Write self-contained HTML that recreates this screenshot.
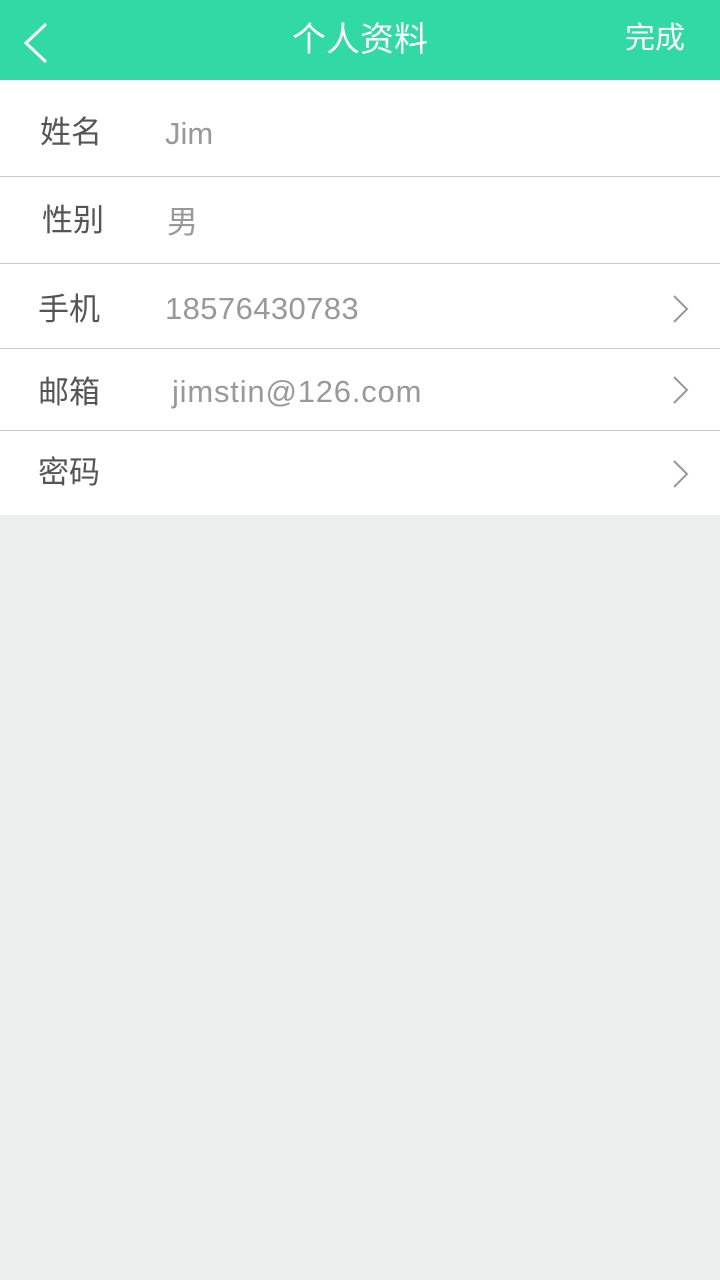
<!DOCTYPE html>
<html><head><meta charset="utf-8"><style>
body{margin:0;width:720px;height:1280px;background:#edefee;font-family:"Liberation Sans","Noto Sans CJK SC",sans-serif;position:relative;overflow:hidden}
.hdr{position:absolute;left:0;top:0;width:720px;height:80px;background:#31d9a3;color:#fff}
.t{position:absolute;left:0;width:720px;top:18px;text-align:center;font-size:34px;line-height:44px}
.done{position:absolute;right:35px;top:19px;font-size:30px;line-height:40px}
.list{position:absolute;top:80px;left:0;width:720px;height:435px;background:#fff}
.row{position:absolute;left:0;width:720px;border-bottom:1px solid #c8c8c8}
.l{position:absolute;font-size:31px;color:#555}
.v{position:absolute;left:165px;font-size:31px;color:#999}
svg.a{position:absolute;right:30px}
</style></head><body>
<div class="hdr">
<svg style="position:absolute;left:22px;top:22px" width="28" height="42"><path d="M24 2 L4 21 L24 40" stroke="#fff" stroke-width="3" fill="none"/></svg>
<div class="t">个人资料</div><div class="done">完成</div></div>
<div class="list">
<div class="row" style="top:0;height:96px"><span class="l" style="left:40px;top:27px">姓名</span><span class="v" style="top:36px">Jim</span></div>
<div class="row" style="top:97px;height:86px"><span class="l" style="left:42px;top:18px">性别</span><span class="v" style="left:167px;top:20px">男</span></div>
<div class="row" style="top:184px;height:84px"><span class="l" style="left:38px;top:20px">手机</span><span class="v" style="top:27px;letter-spacing:0.4px">18576430783</span><svg class="a" style="top:30px" width="18" height="30"><path d="M2 2 L15 15 L2 28" stroke="#999" stroke-width="2" fill="none"/></svg></div>
<div class="row" style="top:269px;height:81px"><span class="l" style="left:38px;top:18px">邮箱</span><span class="v" style="left:172px;top:25px;letter-spacing:0.8px">jimstin@126.com</span><svg class="a" style="top:26px" width="18" height="30"><path d="M2 2 L15 15 L2 28" stroke="#999" stroke-width="2" fill="none"/></svg></div>
<div class="row" style="top:351px;height:84px;border:none"><span class="l" style="left:38px;top:16px">密码</span><svg class="a" style="top:28px" width="18" height="30"><path d="M2 2 L15 15 L2 28" stroke="#999" stroke-width="2" fill="none"/></svg></div>
</div>
</body></html>
